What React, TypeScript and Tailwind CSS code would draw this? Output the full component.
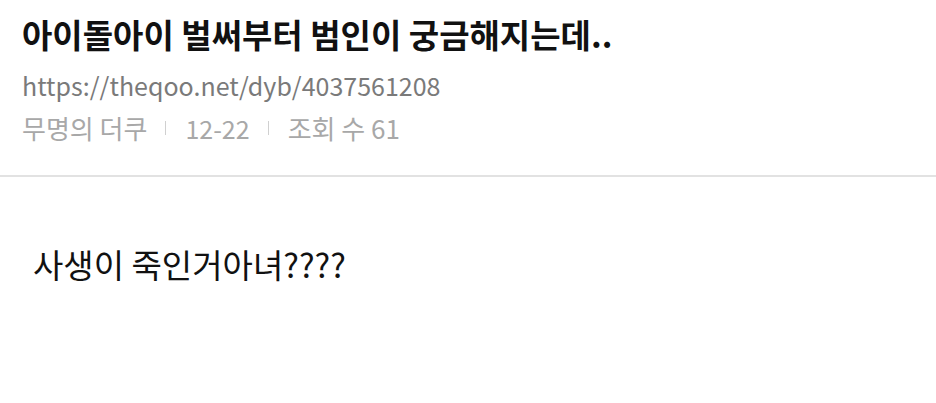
export default function App() {
  const font = { fontFamily: '"Noto Sans CJK KR", "Noto Sans", sans-serif' };
  return (
    <div className="w-[936px] h-[403px] bg-white overflow-hidden" style={font}>
      <div className="px-[22px] pt-[11px] pb-[27px] border-b-2 border-[#e2e2e2]">
        <h1 className="text-[33px] leading-[46px] font-bold text-[#111] whitespace-nowrap">아이돌아이 벌써부터 범인이 궁금해지는데..</h1>
        <div className="text-[25px] leading-[40px] text-[#7a7a7a] mt-[8px]">https://theqoo.net/dyb/4037561208</div>
        <div className="flex items-center text-[26px] leading-[40px] text-[#a8a8a8] mt-[3px]">
          <span>무명의 더쿠</span>
          <span className="ml-[18px] mr-[19px] w-px h-[14px] bg-[#d0d0d0]" />
          <span className="text-[25px]">12-22</span>
          <span className="ml-[18px] mr-[19px] w-px h-[14px] bg-[#d0d0d0]" />
          <span>조회 수 61</span>
        </div>
      </div>
      <div className="px-[33px] pt-[65px] text-[33px] leading-[44px] text-[#111]">사생이 죽인거아녀????</div>
    </div>
  );
}
